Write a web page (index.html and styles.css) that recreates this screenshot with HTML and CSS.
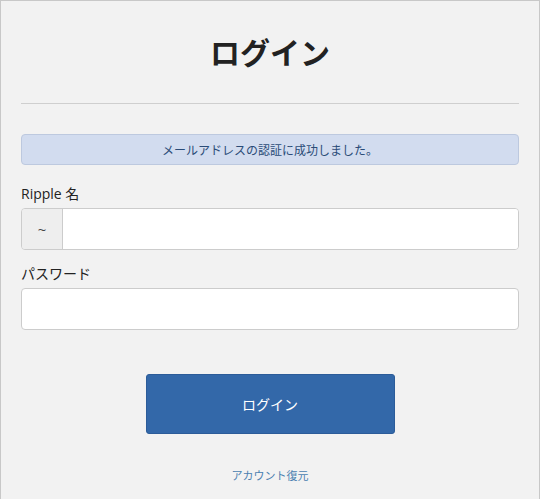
FILE: index.html
```html
<!DOCTYPE html>
<html lang="ja">

<head>
    <meta charset="UTF-8">
    <meta name="viewport" content="width=device-width, initial-scale=1.0">
    <title>ログイン</title>
    <link rel="stylesheet" href="styles.css">
</head>

<body>
    <div class="page">
        <h1>ログイン</h1>
        <hr>
        <div class="alert">メールアドレスの認証に成功しました。</div>

        <form class="login-form">
            <label class="field-label" for="name">Ripple 名</label>
            <div class="input-group">
                <span class="addon">~</span>
                <input type="text" id="name" class="field">
            </div>

            <label class="field-label" for="password">パスワード</label>
            <input type="password" id="password" class="field field-single">

            <div class="actions">
                <button type="submit">ログイン</button>
            </div>
        </form>

        <div class="recover">
            <a href="#">アカウント復元</a>
        </div>
    </div>
</body>

</html>
```

FILE: styles.css
```css
html,
body {
    margin: 0;
    padding: 0;
    height: 100%;
}

body {
    font-family: "Open Sans", "Noto Sans CJK JP", sans-serif;
    background-color: #f2f2f2;
    color: #222;
}

.page {
    box-sizing: border-box;
    min-height: 100%;
    border: 1px solid #c8c8c8;
    border-bottom: none;
    padding: 0 20px;
}

h1 {
    margin: 0;
    padding-top: 29px;
    height: 42px;
    line-height: 42px;
    text-align: center;
    font-family: "Noto Sans CJK JP", sans-serif;
    font-size: 30px;
    font-weight: bold;
    color: #222;
}

hr {
    margin: 31px 0 0;
    border: none;
    border-top: 1px solid #cfcfcf;
}

.alert {
    margin-top: 30px;
    height: 29px;
    line-height: 29px;
    text-align: center;
    background-color: #d2dcef;
    border: 1px solid #bdc9df;
    border-radius: 4px;
    font-family: "Noto Sans CJK JP", sans-serif;
    font-size: 12px;
    color: #2b4c78;
}

.login-form {
    margin-top: 19px;
}

.field-label {
    display: block;
    font-size: 14px;
    line-height: 20px;
    margin-bottom: 4px;
}

.field-label.cjk {
    font-size: 13px;
}

.input-group {
    display: flex;
    height: 42px;
    margin-bottom: 14px;
    border: 1px solid #cccccc;
    border-radius: 4px;
    box-sizing: border-box;
    overflow: hidden;
}

.addon {
    width: 40px;
    display: flex;
    align-items: center;
    justify-content: center;
    background-color: #eeeeee;
    border-right: 1px solid #cccccc;
    font-size: 15px;
    color: #444;
}

.field {
    flex: 1;
    border: none;
    outline: none;
    background: #fff;
    padding: 0 12px;
    font-size: 14px;
}

.field-single {
    display: block;
    width: 100%;
    height: 42px;
    box-sizing: border-box;
    border: 1px solid #cccccc;
    border-radius: 4px;
}

.actions {
    display: flex;
    justify-content: center;
    margin-top: 44px;
}

button {
    width: 249px;
    height: 60px;
    border: 1px solid #2c5c99;
    border-radius: 3px;
    background-color: #3368a9;
    color: #fff;
    font-family: "Noto Sans CJK JP", sans-serif;
    font-size: 14px;
    cursor: pointer;
}

.recover {
    margin-top: 33px;
    text-align: center;
    font-family: "Noto Sans CJK JP", sans-serif;
    font-size: 11px;
}

.recover a {
    color: #4a7fb0;
    text-decoration: none;
}
```
